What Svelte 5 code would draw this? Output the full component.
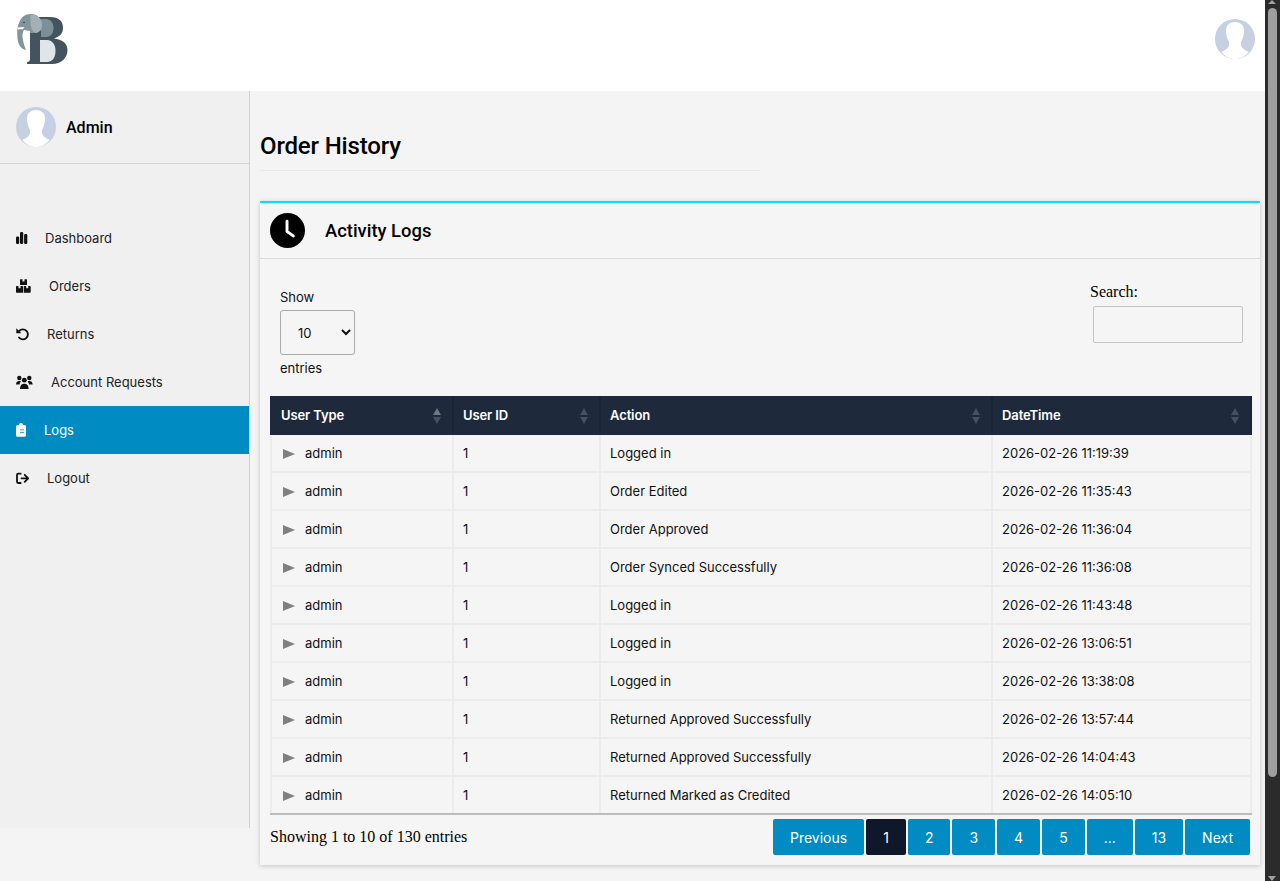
<script>
  const nav = [
    { label: 'Dashboard', icon: 'chart', gap: 11 },
    { label: 'Orders', icon: 'boxes', gap: 15 },
    { label: 'Returns', icon: 'undo', gap: 13 },
    { label: 'Account Requests', icon: 'users', gap: 17 },
    { label: 'Logs', icon: 'clipboard', gap: 10, active: true },
    { label: 'Logout', icon: 'logout', gap: 13 }
  ];

  const logs = [
    ['Logged in', '2026-02-26 11:19:39'],
    ['Order Edited', '2026-02-26 11:35:43'],
    ['Order Approved', '2026-02-26 11:36:04'],
    ['Order Synced Successfully', '2026-02-26 11:36:08'],
    ['Logged in', '2026-02-26 11:43:48'],
    ['Logged in', '2026-02-26 13:06:51'],
    ['Logged in', '2026-02-26 13:38:08'],
    ['Returned Approved Successfully', '2026-02-26 13:57:44'],
    ['Returned Approved Successfully', '2026-02-26 14:04:43'],
    ['Returned Marked as Credited', '2026-02-26 14:05:10']
  ];

  const columns = ['User Type', 'User ID', 'Action', 'DateTime'];
  const pages = ['Previous', '1', '2', '3', '4', '5', '...', '13', 'Next'];
</script>

{#snippet avatar(size)}
  <svg class="avatar" width={size} height={size} viewBox="0 0 40 40">
    <circle cx="20" cy="20" r="20" fill="#c5d0e3" />
    <path d="M20 3c-6 0-9 3.500-9 9 0 4.500 1.300 8 2.800 10.500.6 1.800.5 4-.5 5.500-1.200 1.800-3.500 3-7 5C10 37.500 15 40 20 40s10-2.500 13.700-7c-3.500-2-5.800-3.200-7-5-1-1.500-1.100-3.700-.5-5.500C27.700 20 29 16.500 29 12c0-5.500-3-9-9-9z" fill="#fff" />
  </svg>
{/snippet}

<header class="topbar">
  <svg class="logo" width="54" height="54" viewBox="15 12 54 54">
    <path d="M31 17H50C59 17 63 21 63 28C63 34 59 37 54 38.500C62 39.500 67.500 43 67.500 50C67.500 58 61 64 52 64H27V62C29 62 30 61 30 59V30Z" fill="#43545f" />
    <path d="M41 19H46C51 19 53.500 23 53.500 28C53.500 33 51 37 46 37H41Z" fill="#7d909a" />
    <path d="M40 40H47C52 40 55.500 44 55.500 51C55.500 58 52 62 47 62H40Z" fill="#dfe5e8" />
    <path d="M31 14C37 14 42 18 42 25C42 30 39.500 32 36 33L30 33V31L24 30C22.500 32 22 36 23 40C23.500 44 25 47 26 50C21 49 18 45 17.500 38C17 32 17 27 19 23C21 17 25 14 31 14Z" fill="#82949c" />
    <path d="M31 14.500C37 14.500 42 18 42 25C42 30 39.500 32 36 33C33 32 30.500 28 30.500 22C30.500 18 30 16 31 14.500Z" fill="#a3b1b7" />
    <path d="M17 27.500L24.500 27L23 29L18 29.500Z" fill="#fff" />
    <circle cx="24" cy="22.500" r="0.800" fill="#2d3a42" />
  </svg>
  <span class="top-avatar">{@render avatar(40)}</span>
</header>

<div class="shell">
  <aside class="sidebar">
    <div class="profile">
      {@render avatar(40)}
      <span>Admin</span>
    </div>
    <nav>
      {#each nav as item}
        <a href="#/" class="nav-item" class:active={item.active} style="gap: {item.gap}px">
          <svg class="nav-icon" viewBox="0 0 18 18" fill="currentColor" width="18" height="18">
            {#if item.icon === 'chart'}
              <rect x="0" y="7.500" width="3.200" height="7.500" rx="1.200" />
              <rect x="4" y="3" width="3.200" height="12" rx="1.200" />
              <rect x="8.100" y="5" width="3.200" height="10" rx="1.200" />
            {:else if item.icon === 'boxes'}
              <path d="M4.500 2.300H6.500V4.500H8.500V2.300H10.500A.7.7 0 0 1 11 3V8H4V3a.7.7 0 0 1 .5-.7zM.7 9H2.500V11.200H4.500V9H6.300A.7.7 0 0 1 7 9.700V15.700H.7A.7.7 0 0 1 0 15V9.700A.7.7 0 0 1 .7 9zM8.400 9H10.200V11.200H12.200V9H14A.7.7 0 0 1 14.700 9.700V15A.7.7 0 0 1 14 15.700H7.700V9.700A.7.7 0 0 1 8.400 9z" />
            {:else if item.icon === 'undo'}
              <path d="M3.200 6A5 5 0 1 1 3 12.500" fill="none" stroke="currentColor" stroke-width="1.900" stroke-linecap="round" />
              <path d="M.3 3.300V8.300H5.300z" />
            {:else if item.icon === 'users'}
              <circle cx="3.300" cy="5" r="2.200" /><circle cx="13.300" cy="5" r="2.200" /><circle cx="8.300" cy="7.200" r="2.400" />
              <path d="M0 11.500C0 9 1.300 8 3.300 8c.7 0 1.300.1 1.700.4-.9.8-1.400 1.900-1.400 3.100zM16.600 11.500c0-2.500-1.300-3.500-3.300-3.500-.7 0-1.300.1-1.700.4.900.8 1.400 1.900 1.400 3.100zM4 16c0-3.500 1.500-5.300 4.300-5.300s4.300 1.800 4.300 5.300z" />
            {:else if item.icon === 'clipboard'}
              <path fill-rule="evenodd" d="M3 4a2 2 0 0 1 4 0h1.500A1.500 1.500 0 0 1 10 5.500V14.200A1.500 1.500 0 0 1 8.500 15.700h-7A1.500 1.500 0 0 1 0 14.200V5.500A1.500 1.500 0 0 1 1.500 4zM4 8.500h4v.8H4zM4 11h4v.8H4z" />
            {:else}
              <path d="M4.700 4.700H2.200A1.200 1.200 0 0 0 1 5.900V12.800A1.200 1.200 0 0 0 2.200 14H4.700" fill="none" stroke="currentColor" stroke-width="1.800" stroke-linecap="round" />
              <path d="M5.500 9.300H11.800M8.700 5.800L12.200 9.300L8.700 12.800" fill="none" stroke="currentColor" stroke-width="1.800" stroke-linecap="round" stroke-linejoin="round" />
            {/if}
          </svg>
          <span>{item.label}</span>
        </a>
      {/each}
    </nav>
  </aside>

  <main class="content">
    <h1>Order History</h1>

    <section class="card">
      <div class="card-head">
        <svg width="35" height="35" viewBox="0 0 36 36">
          <circle cx="18" cy="18" r="18" fill="#000" />
          <path d="M17.500 8.500V19l6.500 4.500" fill="none" stroke="#fff" stroke-width="3" stroke-linecap="round" stroke-linejoin="round" />
        </svg>
        <h2>Activity Logs</h2>
      </div>

      <div class="card-body">
        <div class="controls">
          <label class="length">
            <span>Show</span>
            <select>
              <option>10</option>
              <option>25</option>
              <option>50</option>
            </select>
            <span>entries</span>
          </label>
          <label class="search">
            <span>Search:</span>
            <input type="search" />
          </label>
        </div>

        <table>
          <thead>
            <tr>
              {#each columns as col}
                <th>
                  <span>{col}</span>
                  <i class="sort"></i>
                </th>
              {/each}
            </tr>
          </thead>
          <tbody>
            {#each logs as row}
              <tr>
                <td><span class="arrow"></span>admin</td>
                <td>1</td>
                <td>{row[0]}</td>
                <td>{row[1]}</td>
              </tr>
            {/each}
          </tbody>
        </table>

        <div class="table-foot">
          <div class="info">Showing 1 to 10 of 130 entries</div>
          <div class="pager">
            {#each pages as p}
              <button type="button" class:current={p === '1'}>{p}</button>
            {/each}
          </div>
        </div>
      </div>
    </section>
  </main>
</div>

<!-- page scrollbar of the dark browser theme -->
<div class="scrollbar" aria-hidden="true">
  <i class="up"></i>
  <i class="thumb"></i>
  <i class="down"></i>
</div>

<style>
  :global(html) {
    overflow: hidden;
  }

  :global(body) {
    padding-right: 15px;
    background: #f4f4f4;
    font-family: Inter, sans-serif;
    font-size: 13px;
    color: #111;
  }

  .scrollbar {
    position: fixed;
    top: 0;
    right: 0;
    bottom: 0;
    width: 15px;
    background: #2b2b2b;
  }

  .thumb {
    position: absolute;
    left: 3px;
    top: 8px;
    width: 9px;
    height: 769px;
    background: #9f9f9f;
    border-radius: 5px;
  }

  .up, .down {
    position: absolute;
    left: 3px;
    border-left: 4.500px solid transparent;
    border-right: 4.500px solid transparent;
  }

  .up {
    top: 0;
    border-bottom: 4px solid #9f9f9f;
  }

  .down {
    bottom: 0;
    border-top: 5px solid #9f9f9f;
  }

  .topbar {
    height: 91px;
    background: #fff;
    display: flex;
    justify-content: space-between;
    align-items: flex-start;
    padding: 12px 10px 0 15px;
    box-sizing: border-box;
  }

  .top-avatar {
    padding-top: 7px;
  }

  .avatar {
    display: block;
    flex: none;
  }

  .shell {
    display: flex;
    align-items: flex-start;
    padding-bottom: 16px;
  }

  .sidebar {
    width: 250px;
    height: 737px;
    flex: none;
    box-sizing: border-box;
    background: #f0f0f0;
    border-right: 1px solid #cfd2dc;
  }

  .profile {
    height: 73px;
    box-sizing: border-box;
    padding: 0 16px;
    display: flex;
    align-items: center;
    gap: 10px;
    border-bottom: 1px solid #d2d4dc;
    font-family: Roboto, sans-serif;
    font-size: 16px;
    font-weight: 500;
    color: #000;
  }

  nav {
    padding-top: 50px;
  }

  .nav-item {
    height: 48px;
    display: flex;
    align-items: center;
    padding-left: 16px;
    color: #222;
    text-decoration: none;
    font-size: 13px;
  }

  .nav-item.active {
    background: #008cc2;
    color: #fff;
  }

  .nav-icon {
    color: #111;
    flex: none;
  }

  .nav-item.active .nav-icon {
    color: #fff;
  }

  .content {
    flex: 1;
    min-width: 0;
    padding: 0 5px 0 10px;
  }

  h1 {
    width: 500px;
    margin: 0 0 30px;
    padding: 39px 0 8px;
    font-family: Roboto, sans-serif;
    font-size: 24px;
    line-height: 32px;
    font-weight: 500;
    letter-spacing: -0.15px;
    color: #000;
    border-bottom: 1px solid #e8e8e8;
  }

  .card {
    background: #f5f5f5;
    border-top: 2px solid #00e1ff;
    box-shadow: 0 1px 5px rgba(0, 0, 0, 0.2);
  }

  .card-head {
    height: 55px;
    display: flex;
    align-items: center;
    gap: 20px;
    padding: 0 10px;
    border-bottom: 1px solid #ddd;
  }

  h2 {
    margin: 0;
    font-family: Roboto, sans-serif;
    font-size: 18.400px;
    font-weight: 500;
    color: #000;
  }

  .card-body {
    padding: 0 8px 10px 10px;
  }

  .controls {
    display: flex;
    justify-content: space-between;
    height: 137px;
    padding: 0 9px 0 10px;
  }

  .length {
    display: flex;
    flex-direction: column;
    align-items: flex-start;
    padding-top: 30px;
    gap: 5px;
    line-height: 16px;
  }

  select {
    width: 75px;
    height: 45px;
    box-sizing: border-box;
    padding: 0 13px;
    border: 1px solid #aaa;
    border-radius: 3px;
    background: transparent;
    font-family: Inter, sans-serif;
    font-size: 13px;
    color: #111;
  }

  .search {
    display: flex;
    flex-direction: column;
    align-items: flex-end;
    font-family: "Liberation Serif", serif;
    font-size: 16px;
    color: #000;
    padding-top: 24px;
  }

  .search span {
    align-self: flex-start;
    line-height: 18px;
    margin-bottom: 5px;
  }

  .search input {
    width: 150px;
    height: 37px;
    box-sizing: border-box;
    margin-left: 3px;
    border: 1px solid #c4c4c4;
    border-radius: 2px;
    background: transparent;
  }

  table {
    width: 982px;
    border-collapse: collapse;
    table-layout: fixed;
  }

  th {
    height: 37px;
    box-sizing: border-box;
    padding: 0 9px 1px;
    background: #1e293b;
    color: #fff;
    font-size: 13px;
    font-weight: 600;
    letter-spacing: -0.1px;
    text-align: left;
    position: relative;
    border: 2px solid #1e293b;
    border-right-color: #1a2434;
  }

  th:nth-child(1), td:nth-child(1) {
    width: 182px;
  }

  th:nth-child(2), td:nth-child(2) {
    width: 147px;
  }

  th:nth-child(3), td:nth-child(3) {
    width: 392px;
  }

  .sort {
    position: absolute;
    right: 11px;
    top: 10px;
    width: 0;
    height: 0;
    border-left: 4px solid transparent;
    border-right: 4px solid transparent;
    border-bottom: 7px solid #46505f;
  }

  .sort::after {
    content: "";
    position: absolute;
    left: -4px;
    top: 9px;
    border-left: 4px solid transparent;
    border-right: 4px solid transparent;
    border-top: 7px solid #46505f;
  }

  th:first-child .sort {
    border-bottom-color: #6f7784;
  }

  td {
    height: 38px;
    box-sizing: border-box;
    padding: 0 9px;
    border: 2px solid #ececec;
    border-top: 0;
    font-size: 13px;
    color: #111;
  }

  .arrow {
    display: inline-block;
    vertical-align: -1px;
    margin: 0 10px 0 2px;
    border-left: 12px solid #808080;
    border-top: 5.500px solid transparent;
    border-bottom: 5.500px solid transparent;
  }

  tbody tr:last-child td {
    border-bottom: 2px solid #bbb;
  }

  .table-foot {
    display: flex;
    justify-content: space-between;
    align-items: flex-start;
    padding: 4px 2px 0 0;
  }

  .info {
    font-family: "Liberation Serif", serif;
    font-size: 16px;
    color: #000;
    line-height: 35px;
  }

  .pager {
    display: flex;
    gap: 2px;
  }

  .pager button {
    height: 36px;
    padding: 0 17px;
    border: 0;
    border-radius: 2px;
    background: #008cc2;
    color: #fff;
    font-family: Inter, sans-serif;
    font-size: 14px;
  }

  .pager button.current {
    background: #0f172a;
  }
</style>
